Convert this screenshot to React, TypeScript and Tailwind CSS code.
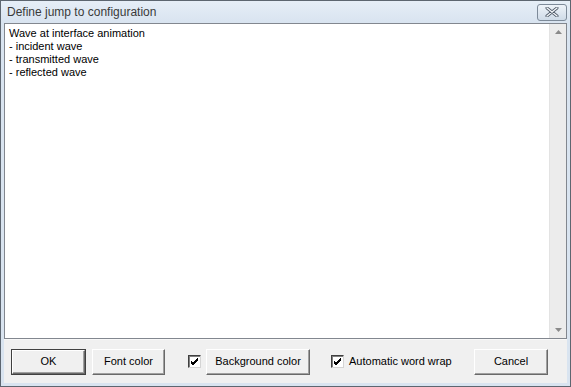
import React from "react";

function Btn({ label, w, def, className = "" }: { label: string; w: number; def?: boolean; className?: string }) {
  return (
    <div
      className={`h-[26px] flex items-center justify-center text-[11px] text-black bg-[#f0f0f0] ${def ? "border border-[#404040]" : ""} ${className}`}
      style={{ width: w }}
    >
      <div className="w-full h-full border-t border-l border-t-white border-l-white border-r border-b border-r-[#696969] border-b-[#696969] flex items-center justify-center shadow-[inset_-1px_-1px_0_#a0a0a0]">
        {label}
      </div>
    </div>
  );
}

function Check({ className = "" }: { className?: string }) {
  return (
    <div className={`w-[13px] h-[13px] bg-white border border-t-[#404040] border-l-[#404040] border-r-[#d4d4d4] border-b-[#d4d4d4] shadow-[inset_1px_1px_0_#808080] flex items-center justify-center ${className}`}>
      <svg width="9" height="9" viewBox="0 0 9 9">
        <path d="M1 4 L3 6 L8 1 M1 5 L3 7 L8 2 M1 6 L3 8 L8 3" stroke="#000" strokeWidth="1" fill="none" />
      </svg>
    </div>
  );
}

export default function App() {
  return (
    <div
      className="w-[571px] h-[387px] border border-[#5d6670] bg-[#d9e4f0] flex flex-col overflow-hidden"
      style={{ fontFamily: '"Liberation Sans", Arial, sans-serif' }}
    >
      <div className="h-[21px] flex items-center pl-[6px] pr-[3px] bg-gradient-to-b from-[#e6eef7] to-[#d9e4f0]">
        <span className="text-[12px] text-[#3a3a3a] mt-[1px]">Define jump to configuration</span>
        <div className="ml-auto w-[30px] h-[17px] mt-[1px] rounded-[3px] border border-[#7d8a99] bg-gradient-to-b from-[#eef3f9] to-[#cfdbe8] flex items-center justify-center">
          <svg width="14" height="10" viewBox="0 0 14 10">
            <path d="M2 1 L12 9 M12 1 L2 9" stroke="#4d5866" strokeWidth="3" strokeLinecap="round" />
            <path d="M2 1 L12 9 M12 1 L2 9" stroke="#f4f7fb" strokeWidth="1.4" strokeLinecap="round" />
          </svg>
        </div>
      </div>
      <div className="flex-1 mx-[3px] mt-[1px] flex flex-col">
        <div className="flex-1 flex border border-[#82878f] bg-white">
          <div className="flex-1 pl-[4px] pt-[3px] text-[11px] leading-[13px] text-black">
            <div>Wave at interface animation</div>
            <div>- incident wave</div>
            <div>- transmitted wave</div>
            <div>- reflected wave</div>
          </div>
          <div className="w-[17px] bg-[#ececec] border-l border-[#e3e3e3] flex flex-col justify-between items-center py-[6px]">
            <svg width="7" height="4" viewBox="0 0 7 4">
              <path d="M0 4 L3.5 0 L7 4 Z" fill="#8a8a8a" />
            </svg>
            <svg width="7" height="4" viewBox="0 0 7 4">
              <path d="M0 0 L3.5 4 L7 0 Z" fill="#8a8a8a" />
            </svg>
          </div>
        </div>
        <div className="h-[44px] bg-[#f0f0f0] border-t border-[#f8f8f8] flex items-center pt-[0px]">
          <Btn label="OK" w={75} def className="ml-[7px]" />
          <Btn label="Font color" w={73} className="ml-[6px]" />
          <Check className="ml-[23px]" />
          <Btn label="Background color" w={104} className="ml-[5px]" />
          <Check className="ml-[21px]" />
          <span className="ml-[5px] text-[11px] text-black">Automatic word wrap</span>
          <Btn label="Cancel" w={74} className="ml-auto mr-[19px]" />
        </div>
      </div>
      <div className="h-[3px]" />
    </div>
  );
}
